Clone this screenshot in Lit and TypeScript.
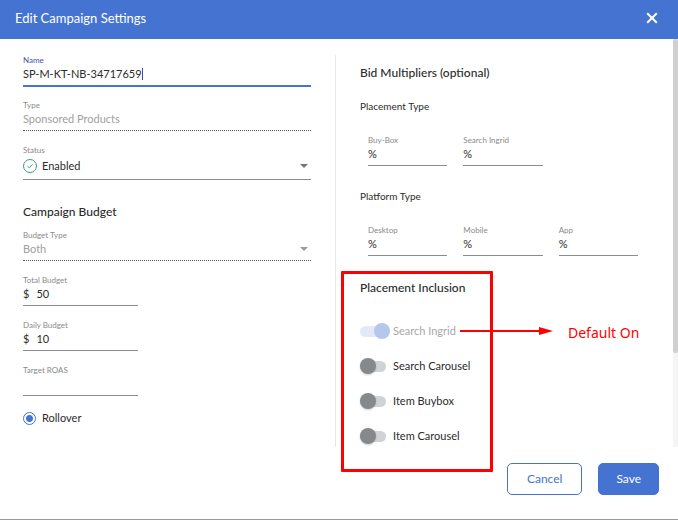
import { LitElement, html, css, nothing } from "lit";
import { customElement, property } from "lit/decorators.js";

const controlText = css`
  input,
  select {
    appearance: none;
    width: 100%;
    min-width: 0;
    margin: 0;
    padding: 0;
    border: 0;
    outline: 0;
    background: transparent;
    color: inherit;
    font: inherit;
    opacity: 1;
  }
`;

@customElement("text-field")
class TextField extends LitElement {
  @property() label = "";
  @property() value = "";
  @property() prefixText = "";
  @property({ type: Boolean, reflect: true }) disabled = false;
  @property({ type: Boolean, reflect: true }) active = false;

  static styles = [
    controlText,
    css`
      :host {
        display: block;
        min-width: 0;
      }
      .label {
        display: block;
        font-size: 8px;
        line-height: 10px;
        color: #8a8a8a;
      }
      .control {
        display: flex;
        align-items: center;
        gap: 7px;
        box-sizing: border-box;
        height: 21px;
        padding-bottom: 2px;
        border-bottom: 1px solid #8c8c8c;
      }
      .input {
        flex: 1;
      }
      .caret {
        width: 1px;
        height: 12px;
        background: #3f51b5;
      }
      :host([active]) .label {
        color: #3f51b5;
      }
      :host([active]) .control {
        gap: 0;
        border-color: #4573d2;
        box-shadow: 0 1px #4573d2;
      }
      :host([active]) .input {
        flex: none;
        width: auto;
        field-sizing: content;
      }
      :host([disabled]) .control {
        border-bottom: 1px dotted #555;
        color: #a0a0a0;
      }
    `,
  ];

  render() {
    return html`
      <label class="label" for="field">${this.label}</label>
      <div class="control">
        ${this.prefixText ? html`<span>${this.prefixText}</span>` : nothing}
        <input class="input" id="field" type="text" .value=${this.value} ?disabled=${this.disabled} />
        ${this.active ? html`<span class="caret"></span>` : nothing}
      </div>
    `;
  }
}

@customElement("select-field")
class SelectField extends LitElement {
  @property() label = "";
  @property() value = "";
  @property({ type: Boolean, reflect: true }) checked = false;
  @property({ type: Boolean, reflect: true }) disabled = false;

  static styles = [
    controlText,
    css`
      :host {
        display: block;
      }
      .label {
        display: block;
        font-size: 8px;
        line-height: 10px;
        color: #8a8a8a;
      }
      .control {
        display: flex;
        align-items: center;
        gap: 5px;
        box-sizing: border-box;
        height: 21px;
        padding: 0 3px 2px 0;
        border-bottom: 1px solid #8c8c8c;
      }
      .select {
        flex: 1;
      }
      .arrow {
        width: 8px;
        height: 4px;
        fill: #757575;
      }
      :host([checked]) .control {
        height: 25px;
      }
      :host([disabled]) .control {
        border-bottom: 1px dotted #555;
        color: #a0a0a0;
      }
      :host([disabled]) .arrow {
        fill: #9a9a9a;
      }
    `,
  ];

  render() {
    return html`
      <label class="label" for="field">${this.label}</label>
      <div class="control">
        ${this.checked
          ? html`<svg width="14" height="14" viewBox="0 0 14 14" fill="none" stroke="#3aa076">
              <circle cx="7" cy="7" r="6.5" />
              <path d="M4.5 7.2 6.3 8.8 9.5 5.4" />
            </svg>`
          : nothing}
        <select class="select" id="field" ?disabled=${this.disabled}>
          <option>${this.value}</option>
        </select>
        <svg class="arrow" viewBox="0 0 8 4"><path d="M0 0H8L4 4Z" /></svg>
      </div>
    `;
  }
}

@customElement("toggle-switch")
class ToggleSwitch extends LitElement {
  @property() label = "";
  @property({ type: Boolean }) on = false;
  @property({ type: Boolean }) disabled = false;

  static styles = css`
    :host {
      display: block;
    }
    .row {
      display: flex;
      align-items: center;
      gap: 7px;
      width: fit-content;
      height: 20px;
    }
    .switch {
      appearance: none;
      flex: none;
      display: flex;
      align-items: center;
      width: 26px;
      height: 11px;
      margin: 0;
      border-radius: 6px;
      background: #d1d2d4;
    }
    .switch::before {
      content: "";
      flex: none;
      width: 16px;
      height: 16px;
      border-radius: 50%;
      background: #86898c;
      box-shadow: 0 1px 2px #0003;
    }
    .switch:checked {
      background: #e3e9f8;
    }
    .switch:checked::before {
      margin-left: 14px;
      background: #b5c7ed;
      box-shadow: none;
    }
    .switch:disabled + .text {
      color: #a8a8a8;
    }
  `;

  render() {
    return html`
      <label class="row">
        <input class="switch" type="checkbox" role="switch" .checked=${this.on} ?disabled=${this.disabled} />
        <span class="text">${this.label}</span>
      </label>
    `;
  }
}

@customElement("app-root")
class AppRoot extends LitElement {
  static styles = css`
    :host {
      display: flex;
      flex-direction: column;
      box-sizing: border-box;
      min-height: 100vh;
      border-bottom: 1px solid #9a9a9a;
      background: #fff;
      color: #2b2b2b;
      font-family: Lato, "Liberation Sans", sans-serif;
      font-size: 11px;
      line-height: 16px;
    }
    .header {
      display: flex;
      align-items: center;
      justify-content: space-between;
      height: 39px;
      padding: 0 20px 4px 15px;
      box-sizing: border-box;
      background: #4573d2;
      color: #fff;
    }
    .title {
      margin: 0;
      font-size: 13px;
      line-height: 20px;
      font-weight: 400;
    }
    .close {
      display: flex;
      padding: 0;
      border: 0;
      background: none;
    }
    .body {
      flex: 1;
      display: grid;
      grid-template-columns: minmax(0, 1fr) minmax(0, 1fr) 6px;
    }
    .settings {
      display: flex;
      flex-direction: column;
      gap: 14px;
      margin-top: 16px;
      padding: 0 24px 21px 23px;
      border-right: 1px solid #e8e8e8;
    }
    .heading {
      margin: 0;
      font-size: 12px;
      line-height: 20px;
      font-weight: 500;
    }
    .budget-heading {
      margin: 8px 0 -6px;
    }
    .short {
      width: 40%;
    }
    .choice {
      display: flex;
      align-items: center;
      gap: 6px;
    }
    .radio {
      appearance: none;
      box-sizing: border-box;
      width: 13px;
      height: 13px;
      margin: 0;
      border: 1px solid #4573d2;
      border-radius: 50%;
      background: radial-gradient(circle, #4573d2 3px, #fff 4px);
    }
    .multipliers {
      padding: 24px 24px 0;
    }
    .subheading {
      margin: 14px 0 0;
      font-size: 10px;
      line-height: 18px;
      font-weight: 400;
    }
    .subheading.platform {
      margin-top: 21px;
    }
    .fields {
      display: grid;
      grid-template-columns: repeat(3, minmax(0, 1fr));
      gap: 16px;
      margin-top: 20px;
      padding: 0 10px 0 8px;
    }
    .inclusion {
      position: relative;
      margin-top: 22px;
    }
    .toggles {
      display: flex;
      flex-direction: column;
      gap: 15px;
      margin-top: 23px;
    }
    .outline {
      position: absolute;
      top: -7px;
      left: -19px;
      box-sizing: border-box;
      width: 152px;
      height: 201px;
      border: 3px solid #f00;
      border-radius: 1px;
      pointer-events: none;
    }
    .note {
      position: absolute;
      top: 45px;
      left: 99px;
      display: flex;
      align-items: flex-start;
      gap: 15px;
      color: #f00;
      font-family: "Noto Sans", sans-serif;
      font-size: 14px;
      line-height: 20px;
      white-space: nowrap;
    }
    .scrollbar {
      justify-self: end;
      width: 5px;
      background: #f5f5f5;
    }
    .thumb {
      height: 77%;
      border-radius: 2px;
      background: #d0d0d0;
    }
    .footer {
      display: flex;
      justify-content: flex-end;
      gap: 16px;
      padding: 16px 19px 24px;
    }
    .button {
      height: 32px;
      padding: 0 19px;
      border: 1px solid #4573d2;
      border-radius: 5px;
      background: #fff;
      color: #4573d2;
      font: inherit;
      font-size: 12px;
    }
    .button.primary {
      padding: 0 17px;
      background: #4573d2;
      color: #fff;
    }
  `;

  render() {
    return html`
      <header class="header">
        <h1 class="title">Edit Campaign Settings</h1>
        <button class="close" aria-label="Close">
          <svg width="12" height="12" viewBox="0 0 12 12" stroke="#fff" stroke-width="2">
            <path d="M1.2 1.2 10.8 10.8M10.8 1.2 1.2 10.8" />
          </svg>
        </button>
      </header>
      <main class="body">
        <section class="settings">
          <text-field label="Name" value="SP-M-KT-NB-34717659" active></text-field>
          <text-field label="Type" value="Sponsored Products" disabled></text-field>
          <select-field label="Status" value="Enabled" checked></select-field>
          <h2 class="heading budget-heading">Campaign Budget</h2>
          <select-field label="Budget Type" value="Both" disabled></select-field>
          <text-field class="short" label="Total Budget" prefixText="$" value="50"></text-field>
          <text-field class="short" label="Daily Budget" prefixText="$" value="10"></text-field>
          <text-field class="short" label="Target ROAS"></text-field>
          <label class="choice"><input class="radio" type="radio" checked />Rollover</label>
        </section>
        <section class="multipliers">
          <h2 class="heading">Bid Multipliers (optional)</h2>
          <h3 class="subheading">Placement Type</h3>
          <div class="fields">
            <text-field label="Buy-Box" prefixText="%"></text-field>
            <text-field label="Search Ingrid" prefixText="%"></text-field>
          </div>
          <h3 class="subheading platform">Platform Type</h3>
          <div class="fields">
            <text-field label="Desktop" prefixText="%"></text-field>
            <text-field label="Mobile" prefixText="%"></text-field>
            <text-field label="App" prefixText="%"></text-field>
          </div>
          <div class="inclusion">
            <h2 class="heading">Placement Inclusion</h2>
            <div class="toggles">
              <toggle-switch label="Search Ingrid" on disabled></toggle-switch>
              <toggle-switch label="Search Carousel"></toggle-switch>
              <toggle-switch label="Item Buybox"></toggle-switch>
              <toggle-switch label="Item Carousel"></toggle-switch>
            </div>
            <div class="outline"></div>
            <div class="note">
              <svg width="94" height="16" viewBox="0 0 94 16" fill="#f00">
                <path d="M1 7H80V4L94 8 80 12V9H1Z" />
              </svg>
              <span>Default On</span>
            </div>
          </div>
        </section>
        <div class="scrollbar"><div class="thumb"></div></div>
      </main>
      <footer class="footer">
        <button class="button">Cancel</button>
        <button class="button primary">Save</button>
      </footer>
    `;
  }
}
